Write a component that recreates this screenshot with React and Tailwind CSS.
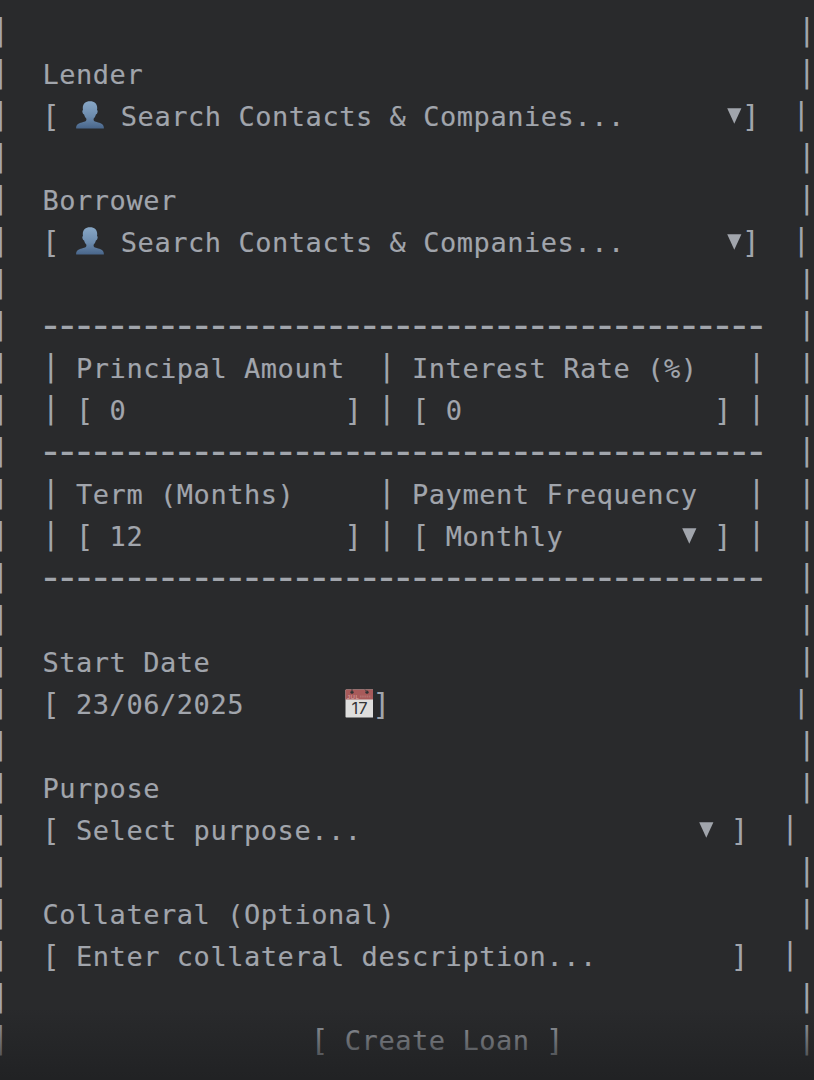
function Arrow() {
  return (
    <span className="inline-flex h-[42px] w-[16.8px] shrink-0 items-center justify-center">
      <svg width="15" height="16" viewBox="0 0 15 16">
        <path d="M.2.2h14.200L7.300 15.800z" fill="#a1a5ac" />
      </svg>
    </span>
  );
}

function Person() {
  return (
    <svg className="-mt-0.5 h-7 w-7 shrink-0" viewBox="0 0 28 28">
      <defs>
        <linearGradient id="person" x1="0" y1="0" x2="0" y2="1">
          <stop offset="0" stopColor="#88a7c6" />
          <stop offset="0.55" stopColor="#6d8cae" />
          <stop offset="1" stopColor="#48658a" />
        </linearGradient>
      </defs>
      <path
        d="M14 .3c4.500 0 7.200 2.600 7.200 6.600 0 .9-.1 1.500-.2 2 .9.3.8 1.800.3 3-.3.9-.8 1.300-1.300 1.400-.5 1.900-1.200 3.300-2.400 4.500-.2 2.500.9 2.900 4.500 3.600 3.700.8 5.600 2 5.800 5.600 0 .4-.2.6-.6.6H.7c-.4 0-.6-.2-.6-.6.2-3.600 2.100-4.800 5.800-5.600 3.600-.7 4.700-1.100 4.500-3.600-1.200-1.200-1.900-2.600-2.400-4.500-.5-.1-1-.5-1.300-1.400-.5-1.200-.6-2.700.3-3-.1-.5-.2-1.100-.2-2C6.800 2.900 9.500.3 14 .3z"
        fill="url(#person)"
      />
    </svg>
  );
}

function Calendar() {
  return (
    <svg className="-mt-0.5 h-[29px] w-7 shrink-0" viewBox="0 0 28 29">
      <rect x=".5" y=".5" width="28" height="28" rx=".8" fill="#dededd" />
      <path d="M.5 10.500V1.300q0-.8.8-.8h26.400q.5 0 .5.8v9.200z" fill="#a85a5a" />
      <text x="2" y="9.500" fontSize="6" fontFamily="Liberation Sans, sans-serif" fill="#d8a9a8" stroke="none">JUL</text>
      <path d="M15 7.500h11" stroke="#b27170" strokeWidth="2" strokeDasharray="1.500 .7" />
      <circle cx="7" cy="3.200" r="1.600" fill="#303133" />
      <circle cx="22" cy="3.200" r="1.600" fill="#303133" />
      <path d="M7 3V0M22 3l-2-2.500" stroke="#4b4545" strokeWidth="1" />
      <text x="14.500" y="25" textAnchor="middle" fontSize="16.500" letterSpacing="0" fontFamily="Inter, sans-serif" fill="#333537" stroke="none">17</text>
    </svg>
  );
}

const search = ["|  [ ", "person", " Search Contacts & Companies...      ", "arrow", "]  |"];
const blank = ["|" + " ".repeat(47) + "|"];
const label = (text) => ["|  " + text.padEnd(45) + "|"];
const rule = ["|  ", "rule", "  |"];

const rows = [
  blank,
  label("Lender"),
  search,
  blank,
  label("Borrower"),
  search,
  blank,
  rule,
  ["|  | Principal Amount  | Interest Rate (%)   |  |"],
  ["|  | [ 0             ] | [ 0               ] |  |"],
  rule,
  ["|  | Term (Months)     | Payment Frequency   |  |"],
  ["|  | [ 12            ] | [ Monthly       ", "arrow", " ] |  |"],
  rule,
  blank,
  label("Start Date"),
  ["|  [ 23/06/2025      ", "calendar", "]" + " ".repeat(24) + "|"],
  blank,
  label("Purpose"),
  ["|  [ Select purpose..." + " ".repeat(20), "arrow", " ]  |"],
  blank,
  label("Collateral (Optional)"),
  ["|  [ Enter collateral description...        ]  |"],
  blank,
  label(" ".repeat(16) + "[ Create Loan ]"),
];

function Part({ value }) {
  if (value === "arrow") return <Arrow />;
  if (value === "person") return <Person />;
  if (value === "calendar") return <Calendar />;
  if (value === "rule")
    return (
      <span className="w-[722.4px] shrink-0 -indent-1 pt-1 font-['Liberation_Mono',monospace] text-[40px] leading-[42px] tracking-[-7.2px] [-webkit-text-stroke:0px]">
        {"-".repeat(43)}
      </span>
    );
  return value.split(/([|[\]])/).filter(Boolean).map((text, i) => {
    if (text === "|")
      return (
        <span key={i} className="flex w-[16.8px] shrink-0 justify-center pb-1 text-[30px] leading-[42px] tracking-normal [-webkit-text-stroke:0px]">|</span>
      );
    if (text === "[" || text === "]")
      return (
        <span key={i} className="flex w-[16.8px] shrink-0 justify-center pt-px text-[30px] leading-[42px] tracking-normal [-webkit-text-stroke:0px]">{text}</span>
      );
    return (
      <span key={i} className="shrink-0 pt-px">{text}</span>
    );
  });
}

export default function App() {
  return (
    <main className="relative h-[1080px] w-[814px] overflow-hidden bg-[#292a2c] pt-[11px] font-['DejaVu_Sans_Mono',monospace] text-[27px] leading-[42px] tracking-[0.5449px] text-[#a1a5ac] [-webkit-text-stroke:0.15px_#a1a5ac]">
      <div className="-ml-2 flex flex-col">
        {rows.map((parts, row) => (
          <div key={row} className="flex h-[42px] items-center whitespace-pre">
            {parts.map((value, i) => (
              <Part key={i} value={value} />
            ))}
          </div>
        ))}
      </div>
      <div className="pointer-events-none absolute inset-x-0 bottom-0 h-[72px] bg-linear-to-b from-[#202123]/0 to-[#202123]/90" />
    </main>
  );
}
